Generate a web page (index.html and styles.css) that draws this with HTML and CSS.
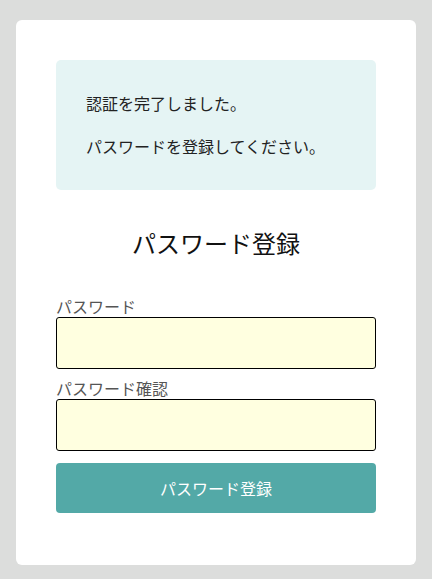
FILE: index.html
```html
<!DOCTYPE html>
<html lang="ja">
<head>
<meta charset="utf-8">
<title>パスワード登録</title>
<link rel="stylesheet" href="styles.css">
</head>
<body>
<main class="card">
  <div class="notice">
    <p>認証を完了しました。</p>
    <p>パスワードを登録してください。</p>
  </div>
  <h1 class="title">パスワード登録</h1>
  <form class="form">
    <label class="label" for="pw">パスワード</label>
    <input class="input" id="pw" type="password">
    <label class="label label-second" for="pw2">パスワード確認</label>
    <input class="input" id="pw2" type="password">
    <button class="button" type="button">パスワード登録</button>
  </form>
</main>
</body>
</html>
```

FILE: styles.css
```css
html, body {
  margin: 0;
  padding: 0;
}
body {
  background: #dcdddc;
  font-family: "Noto Sans CJK JP", "Noto Sans", sans-serif;
  padding: 20px 16px 13px;
}
.card {
  background: #ffffff;
  border-radius: 6px;
  padding: 40px 40px 52px;
  box-sizing: border-box;
  width: 400px;
}
.notice {
  background: #e5f4f4;
  border-radius: 5px;
  padding: 32px 30px 33px;
  color: #222;
  font-size: 16px;
  line-height: 22px;
}
.notice p {
  margin: 0;
}
.notice p + p {
  margin-top: 21px;
}
.title {
  margin: 37px 0 0;
  text-align: center;
  font-size: 24px;
  font-weight: normal;
  line-height: 32px;
  color: #111;
}
.form {
  margin-top: 37px;
  display: flex;
  flex-direction: column;
}
.label {
  display: block;
  font-size: 16px;
  line-height: 20px;
  color: #555;
  margin-bottom: 1px;
}
.label-second {
  margin-top: 9px;
}
.input {
  box-sizing: border-box;
  width: 320px;
  height: 52px;
  margin: 0;
  border: 1px solid #000;
  border-radius: 3px;
  background: #ffffe0;
  font-size: 16px;
  padding: 0 10px;
}
.button {
  margin-top: 12px;
  width: 320px;
  height: 50px;
  border: none;
  border-radius: 4px;
  background: #53a9a7;
  color: #fff;
  font-family: "Noto Sans CJK JP", "Noto Sans", sans-serif;
  font-size: 16px;
  font-weight: 400;
}
```
